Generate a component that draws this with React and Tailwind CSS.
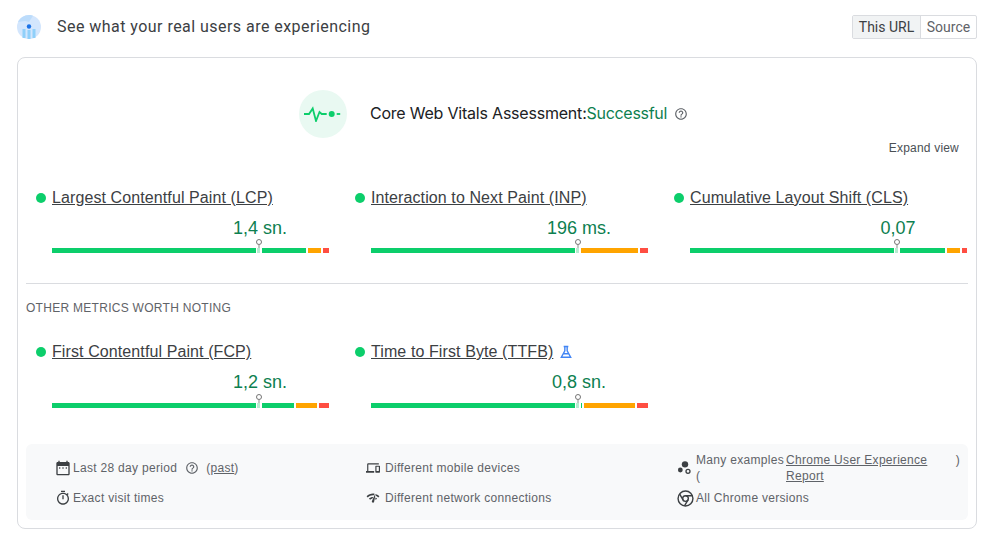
import React from "react";

const core = [
  { name: "Largest Contentful Paint (LCP)", value: "1,4 sn.", good: "w-[254px]", ok: "w-[13px]", bad: "w-[6px]" },
  { name: "Interaction to Next Paint (INP)", value: "196 ms.", good: "w-[208px]", ok: "w-[57px]", bad: "w-[8px]" },
  { name: "Cumulative Layout Shift (CLS)", value: "0,07", good: "w-[255px]", ok: "w-[13px]", bad: "w-[5px]" },
];

const other = [
  { name: "First Contentful Paint (FCP)", value: "1,2 sn.", good: "w-[242px]", ok: "w-[21px]", bad: "w-[10px]" },
  { name: "Time to First Byte (TTFB)", value: "0,8 sn.", good: "w-[211px]", ok: "w-[51px]", bad: "w-[11px]", lab: true },
];

function HelpIcon({ className }) {
  return (
    <svg viewBox="0 0 24 24" className={className} fill="currentColor">
      <path d="M11 18h2v-2h-2v2zm1-16C6.48 2 2 6.48 2 12s4.48 10 10 10 10-4.48 10-10S17.52 2 12 2zm0 18c-4.41 0-8-3.59-8-8s3.59-8 8-8 8 3.59 8 8-3.59 8-8 8zm0-14c-2.21 0-4 1.79-4 4h2c0-1.1.9-2 2-2s2 .9 2 2c0 2-3 1.75-3 5h2c0-2.25 3-2.5 3-5 0-2.21-1.79-4-4-4z" />
    </svg>
  );
}

function Logo() {
  return (
    <svg viewBox="0 0 24 24" className="w-6 h-6 shrink-0">
      <circle cx="12" cy="12" r="12" fill="#d3e6fd" />
      <path d="M1 7C3 3 7 0 12 0c2 0 3 .3 4 .8L12 7 8 6z" fill="#bcdcfb" />
      <rect x="5.5" y="14" width="3" height="9" fill="#8fd0fa" />
      <rect x="10.5" y="15" width="3" height="9" fill="#8fd0fa" />
      <rect x="15.5" y="14" width="3" height="9" fill="#8fd0fa" />
      <circle cx="12" cy="11.5" r="2.2" fill="#1a73e8" />
    </svg>
  );
}

function Pulse() {
  return (
    <div className="w-12 h-12 rounded-full bg-[#e9f9f2] flex items-center justify-center shrink-0">
      <svg viewBox="0 0 38 16" className="w-[38px] h-4" fill="none" stroke="#0cce6b" strokeWidth="1.8">
        <path d="M0 8h5l3.7-5.5L12 15l3.5-9 2.2 2h5" />
        <circle cx="27.7" cy="8" r="3" fill="#0cce6b" stroke="none" />
        <path d="M32.7 8h3.5" />
      </svg>
    </div>
  );
}

function Metric({ m, barGap }) {
  return (
    <div>
      <div className="flex items-center h-6">
        <span className="w-[10px] h-[10px] rounded-full bg-[#0cce6b] mr-[6px]" />
        <a className="text-base tracking-[0.1px] underline text-[#3c4043] whitespace-nowrap">{m.name}</a>
        {m.lab && (
          <svg viewBox="0 0 24 24" className="w-[14px] h-[14px] ml-[6px]" fill="none" stroke="#4285f4" strokeWidth="2.4">
            <path d="M8 2.5h8M10 3v7L4 21h16l-6-11V3M7.5 15h9" />
          </svg>
        )}
      </div>
      <div className="ml-4 mt-[6px] w-[277px]">
        <div className="h-6 flex items-center">
          <div className="ml-[208px] w-0 flex justify-center">
            <span className="text-lg leading-6 text-[#0d8050] whitespace-nowrap">{m.value}</span>
          </div>
        </div>
        <div className={`relative ${barGap} h-[5px] flex gap-[2px]`}>
          <div className={`${m.good} bg-[#0cce6b]`} />
          <div className={`${m.ok} bg-[#ffa400]`} />
          <div className={`${m.bad} bg-[#ff4e42]`} />
          <div className="absolute left-[204px] top-0 w-[6px] h-[5px] bg-white" />
          <div className="absolute left-[205px] top-0 w-[3px] h-[5px] bg-[#b7ebd0]" />
          <div className="absolute left-[204px] top-[-9px] w-[6px] h-[6px] rounded-full border border-[#757575] bg-white" />
          <div className="absolute left-[206px] top-[-3px] w-[2px] h-[3px] bg-[#c4c7c5]" />
        </div>
      </div>
    </div>
  );
}

function InfoIcon({ children, className = "w-[14px] h-[14px]" }) {
  return (
    <svg viewBox="0 0 24 24" className={`${className} shrink-0 text-[#3c4043]`} fill="currentColor">
      {children}
    </svg>
  );
}

export default function App() {
  return (
    <div className="w-[995px] h-[546px] bg-white px-[17px] pt-[14px] font-['Liberation_Sans',sans-serif] overflow-hidden">
      <div className="flex items-center h-[26px] w-[960px]">
        <Logo />
        <h2 className="ml-4 text-base text-[#3c4043] tracking-[0.46px] font-['Roboto',sans-serif]">
          See what your real users are experiencing
        </h2>
        <div className="ml-auto flex h-6 border border-[#dadce0] rounded-[2px] text-sm text-[#5f6368] font-['Roboto',sans-serif]">
          <div className="w-[68px] flex items-center justify-center bg-[#f1f3f4] border-r border-[#dadce0] text-[#3c4043]">This URL</div>
          <div className="w-[55px] flex items-center justify-center">Source</div>
        </div>
      </div>

      <div className="mt-[17px] w-[960px] h-[472px] border border-[#dadce0] rounded-lg px-2">
        <div className="pt-8 flex items-center justify-center pr-[7px]">
          <Pulse />
          <span className="ml-[23px] mb-[2px] text-base text-[#202124] font-['Inter',sans-serif] tracking-[-0.21px]">Core Web Vitals Assessment:</span>
          <span className="mb-[2px] text-base text-[#0d8050] font-['Inter',sans-serif] tracking-[-0.3px]">Successful</span>
          <HelpIcon className="w-[14px] h-[14px] ml-[7px] text-[#5f6368]" />
        </div>

        <div className="mt-[3px] h-[14px] flex justify-end pr-[9px] text-xs leading-[14px] tracking-[0.2px] text-[#4a4f54]">Expand view</div>

        <div className="mt-[31px] pl-[10px] grid grid-cols-[319px_319px_1fr]">
          {core.map((m) => (
            <Metric key={m.name} m={m} barGap="mt-[8px]" />
          ))}
        </div>

        <div className="mt-[30px] border-t border-[#dadce0]" />

        <div className="mt-[17px] h-[14px] text-xs leading-[14px] tracking-[0.28px] text-[#5f6368]">OTHER METRICS WORTH NOTING</div>

        <div className="mt-[25px] pl-[10px] grid grid-cols-[319px_319px_1fr]">
          {other.map((m) => (
            <Metric key={m.name} m={m} barGap="mt-[9px]" />
          ))}
        </div>

        <div className="mt-[36px] h-[76px] bg-[#f8f9fa] rounded-md pl-[29px] pr-2 pt-[9px] grid grid-cols-[311px_311px_1fr] text-xs tracking-[0.3px] text-[#5f6368]">
          <div className="flex flex-col">
            <div className="h-[30px] flex items-center gap-[2px]">
              <InfoIcon className="w-4 h-4">
                <path d="M20 3h-1V1h-2v2H7V1H5v2H4c-1.1 0-2 .9-2 2v16c0 1.1.9 2 2 2h16c1.1 0 2-.9 2-2V5c0-1.1-.9-2-2-2zm0 18H4V9h16v12z" />
                <rect x="6" y="11" width="2" height="2" />
                <rect x="11" y="11" width="2" height="2" />
                <rect x="16" y="11" width="2" height="2" />
              </InfoIcon>
              <span>Last 28 day period</span>
              <HelpIcon className="w-[14px] h-[14px] ml-[6px] text-[#5f6368]" />
              <span className="ml-[5px]">
                (<a className="underline">past</a>)
              </span>
            </div>
            <div className="h-[30px] flex items-center gap-[2px]">
              <InfoIcon className="w-4 h-4">
                <path d="M15 1H9v2h6V1zm-4 13h2V8h-2v6zm8.03-6.61l1.42-1.42c-.43-.51-.9-.99-1.41-1.41l-1.42 1.42C16.07 4.74 14.12 4 12 4c-4.97 0-9 4.03-9 9s4.02 9 9 9 9-4.03 9-9c0-2.12-.74-4.07-1.97-5.61zM12 20c-3.87 0-7-3.13-7-7s3.13-7 7-7 7 3.13 7 7-3.13 7-7 7z" />
              </InfoIcon>
              <span>Exact visit times</span>
            </div>
          </div>

          <div className="flex flex-col">
            <div className="h-[30px] flex items-center gap-[5px]">
              <InfoIcon>
                <path d="M4 6h18V4H4c-1.1 0-2 .9-2 2v11H0v3h14v-3H4V6zm19 2h-6c-.55 0-1 .45-1 1v10c0 .55.45 1 1 1h6c.55 0 1-.45 1-1V9c0-.55-.45-1-1-1zm-1 9h-4v-7h4v7z" />
              </InfoIcon>
              <span>Different mobile devices</span>
            </div>
            <div className="h-[30px] flex items-center gap-[5px]">
              <InfoIcon>
                <path d="M15.9 5c-.17 0-.32.09-.41.23l-.07.15-5.18 11.65c-.16.29-.26.61-.26.96 0 1.11.9 2.01 2.01 2.01.96 0 1.77-.68 1.96-1.59l.01-.03L16.4 5.5c0-.28-.22-.5-.5-.5zM1 9l2 2c2.88-2.88 6.79-4.08 10.53-3.62l1.19-2.68C9.89 3.84 4.74 5.27 1 9zm20 2l2-2c-1.64-1.64-3.54-2.82-5.57-3.57l-.53 2.82c1.5.62 2.9 1.53 4.1 2.75zm-4 4l2-2c-.8-.8-1.7-1.42-2.66-1.89l-.55 2.92c.42.27.83.59 1.21.97zM5 13l2 2c1.13-1.13 2.56-1.79 4.03-2l1.28-2.88c-2.63-.08-5.3.87-7.31 2.88z" />
              </InfoIcon>
              <span>Different network connections</span>
            </div>
          </div>

          <div className="flex flex-col">
            <div className="h-[30px] flex items-center gap-[3px]">
              <InfoIcon className="w-4 h-4">
                <circle cx="12" cy="6.5" r="4.8" />
                <circle cx="5" cy="15" r="3.6" />
                <circle cx="16.5" cy="17" r="3" fill="none" stroke="currentColor" strokeWidth="2" />
              </InfoIcon>
              <div className="flex leading-4 w-[264px]">
                <span className="w-[90px] shrink-0">Many examples (</span>
                <a className="underline w-[160px] shrink-0">Chrome User Experience Report</a>
                <span className="ml-auto">)</span>
              </div>
            </div>
            <div className="h-[30px] flex items-center gap-[2px]">
              <InfoIcon className="w-[17px] h-[17px]">
                <g fill="none" stroke="currentColor" strokeWidth="2">
                  <circle cx="12" cy="12" r="10.5" />
                  <circle cx="12" cy="12" r="4" />
                  <path d="M12 8h9.8M8.5 14L3.6 5.6M15.5 14l-4.9 8.4" />
                </g>
              </InfoIcon>
              <span>All Chrome versions</span>
            </div>
          </div>
        </div>
      </div>
    </div>
  );
}
